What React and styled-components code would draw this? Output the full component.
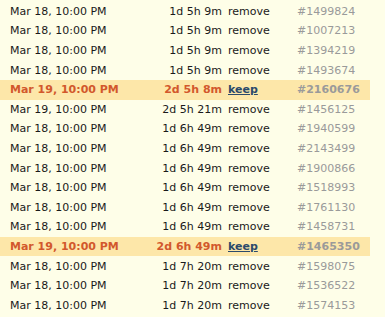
import React from "react";
import styled, { createGlobalStyle } from "styled-components";

const rows = [
  { date: "Mar 18, 10:00 PM", dur: "1d 5h 9m", id: "1499824" },
  { date: "Mar 18, 10:00 PM", dur: "1d 5h 9m", id: "1007213" },
  { date: "Mar 18, 10:00 PM", dur: "1d 5h 9m", id: "1394219" },
  { date: "Mar 18, 10:00 PM", dur: "1d 5h 9m", id: "1493674" },
  { date: "Mar 19, 10:00 PM", dur: "2d 5h 8m", id: "2160676", keep: true },
  { date: "Mar 19, 10:00 PM", dur: "2d 5h 21m", id: "1456125" },
  { date: "Mar 18, 10:00 PM", dur: "1d 6h 49m", id: "1940599" },
  { date: "Mar 18, 10:00 PM", dur: "1d 6h 49m", id: "2143499" },
  { date: "Mar 18, 10:00 PM", dur: "1d 6h 49m", id: "1900866" },
  { date: "Mar 18, 10:00 PM", dur: "1d 6h 49m", id: "1518993" },
  { date: "Mar 18, 10:00 PM", dur: "1d 6h 49m", id: "1761130" },
  { date: "Mar 18, 10:00 PM", dur: "1d 6h 49m", id: "1458731" },
  { date: "Mar 19, 10:00 PM", dur: "2d 6h 49m", id: "1465350", keep: true },
  { date: "Mar 18, 10:00 PM", dur: "1d 7h 20m", id: "1598075" },
  { date: "Mar 18, 10:00 PM", dur: "1d 7h 20m", id: "1536522" },
  { date: "Mar 18, 10:00 PM", dur: "1d 7h 20m", id: "1574153" },
];

const Global = createGlobalStyle`
  body {
    margin: 0;
    background: #fefee8;
    font-family: "DejaVu Sans", sans-serif;
    font-size: 11px;
    color: #1a1a1a;
  }
`;

const List = styled.div`
  padding-top: 1.6px;
  width: 370px;
`;

const Row = styled.div`
  display: grid;
  grid-template-columns: 140px 82px 75px 1fr;
  align-items: center;
  height: 19.6px;
  background: ${(p) => (p.keep ? "#fde7a9" : "transparent")};
  font-weight: ${(p) => (p.keep ? "bold" : "normal")};
`;

const Date = styled.span`
  padding-left: 10px;
  color: ${(p) => (p.keep ? "#d2582c" : "inherit")};
  white-space: nowrap;
`;

const Dur = styled.span`
  text-align: right;
  white-space: nowrap;
  color: ${(p) => (p.keep ? "#d2582c" : "inherit")};
`;

const Action = styled.span`
  padding-left: 6px;
`;

const Keep = styled.a`
  color: #2b4a6b;
  text-decoration: underline;
`;

const Id = styled.span`
  color: #9a9a9a;
`;

export default function App() {
  return (
    <>
      <Global />
      <List>
        {rows.map((r, i) => (
          <Row key={i} keep={r.keep}>
            <Date keep={r.keep}>{r.date}</Date>
            <Dur keep={r.keep}>{r.dur}</Dur>
            <Action>{r.keep ? <Keep href="#">keep</Keep> : "remove"}</Action>
            <Id>#{r.id}</Id>
          </Row>
        ))}
      </List>
    </>
  );
}
